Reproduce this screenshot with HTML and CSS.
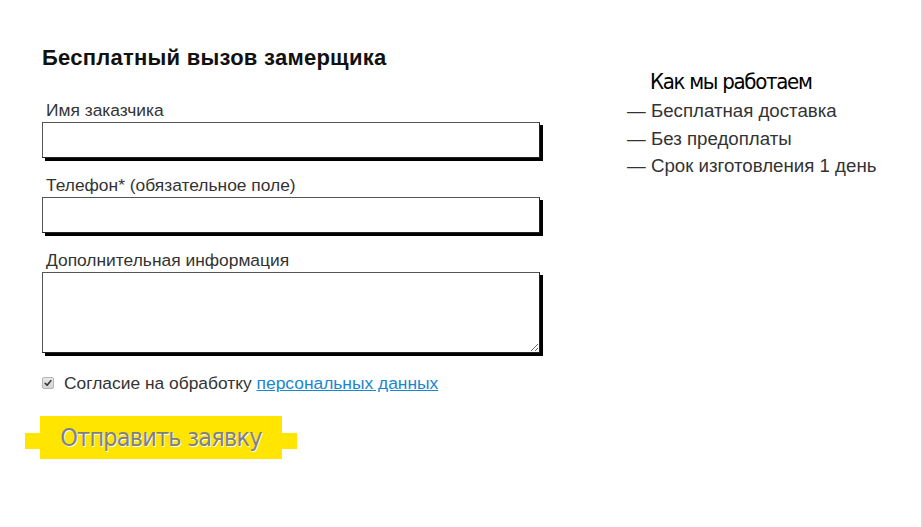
FILE: index.html
```html
<!DOCTYPE html>
<html lang="ru">
<head>
<meta charset="utf-8">
<title>Бесплатный вызов замерщика</title>
<link rel="stylesheet" href="styles.css">
</head>
<body>
<div class="page">
  <main class="form-col">
    <h2 class="title">Бесплатный вызов замерщика</h2>
    <form class="form">
      <div class="field">
        <label class="label" for="name">Имя заказчика</label>
        <input class="input" id="name" type="text">
      </div>
      <div class="field">
        <label class="label" for="phone">Телефон* (обязательное поле)</label>
        <input class="input" id="phone" type="text">
      </div>
      <div class="field">
        <label class="label" for="info">Дополнительная информация</label>
        <textarea class="input textarea" id="info"></textarea>
      </div>
      <label class="agree">
        <span class="check"><svg viewBox="0 0 12 12" width="12" height="12"><path d="M2.6 6.3 L4.9 8.6 L9.4 3.2" fill="none" stroke="#333" stroke-width="1.9" stroke-linecap="round" stroke-linejoin="round"/></svg></span>
        <span class="agree-text">Согласие на обработку <a class="link" href="#">персональных данных</a></span>
      </label>
      <button class="submit" type="button">
        <span class="tab"></span>
        <span class="submit-main">Отправить заявку</span>
        <span class="tab"></span>
      </button>
    </form>
  </main>
  <aside class="info">
    <h3 class="info-title">Как мы работаем</h3>
    <ul class="info-list">
      <li>— Бесплатная доставка</li>
      <li>— Без предоплаты</li>
      <li>— Срок изготовления 1 день</li>
    </ul>
  </aside>
</div>
</body>
</html>
```

FILE: styles.css
```css
html, body {
  margin: 0;
  padding: 0;
  background: #fff;
}

.page {
  width: 921px;
  height: 527px;
  border-right: 2px solid #dadada;
  display: flex;
  font-family: "Liberation Sans", Arial, sans-serif;
  color: #333;
}

.form-col {
  width: 500px;
  padding: 45px 0 0 42px;
  box-sizing: content-box;
}

.title {
  margin: 0;
  font-size: 22px;
  line-height: 26px;
  font-weight: bold;
  color: #111;
  letter-spacing: 0.25px;
}

.form {
  display: flex;
  flex-direction: column;
  margin-top: 30px;
}

.field {
  display: flex;
  flex-direction: column;
  gap: 3px;
  margin-bottom: 18px;
}

.label {
  font-size: 17.4px;
  line-height: 18px;
  padding-left: 4px;
  color: #333;
}

.input {
  display: block;
  width: 498px;
  height: 36px;
  box-sizing: border-box;
  margin: 0;
  border: 1px solid #555;
  border-right-color: #222;
  border-bottom-color: #222;
  background: #fff;
  box-shadow: 3px 3px 0 #000;
  font-family: inherit;
  font-size: 15px;
  padding: 4px 8px;
  outline: none;
}

.textarea {
  height: 81px;
  resize: vertical;
}

.agree {
  display: flex;
  align-items: center;
  gap: 10px;
  margin-top: 3px;
  font-size: 17.4px;
  line-height: 18px;
  color: #333;
}

.check {
  width: 12px;
  height: 12px;
  box-sizing: border-box;
  border: 1px solid #b4b4b4;
  border-radius: 2px;
  background: linear-gradient(#e8e8e8, #d4d4d4);
  display: flex;
  align-items: center;
  justify-content: center;
  flex: none;
}

.check svg {
  display: block;
  width: 10px;
  height: 10px;
}

.link {
  color: #1a86cf;
  text-decoration: underline;
}

.submit {
  display: flex;
  align-items: flex-end;
  align-self: flex-start;
  margin: 24px 0 0 -17px;
  padding: 0;
  border: 0;
  background: none;
  cursor: pointer;
}

.tab {
  width: 15px;
  height: 16px;
  background: #ffe500;
  margin-bottom: 10px;
}

.submit-main {
  display: block;
  width: 242px;
  height: 43px;
  background: #ffe500;
  font-family: "DejaVu Sans Condensed", "DejaVu Sans", sans-serif;
  font-size: 25px;
  line-height: 43px;
  letter-spacing: -0.8px;
  text-align: center;
  color: #808080;
  text-shadow: 1px 1px 0 #fff;
}

.info {
  margin-left: 85px;
  padding-top: 68px;
}

.info-title {
  margin: 0 0 1px 23px;
  font-family: "DejaVu Sans Condensed", "DejaVu Sans", sans-serif;
  font-weight: normal;
  font-size: 22px;
  line-height: 28px;
  letter-spacing: -1.3px;
  color: #000;
}

.info-list {
  list-style: none;
  margin: 0;
  padding: 0;
  font-size: 18.7px;
  line-height: 27.5px;
  color: #333;
}
```
